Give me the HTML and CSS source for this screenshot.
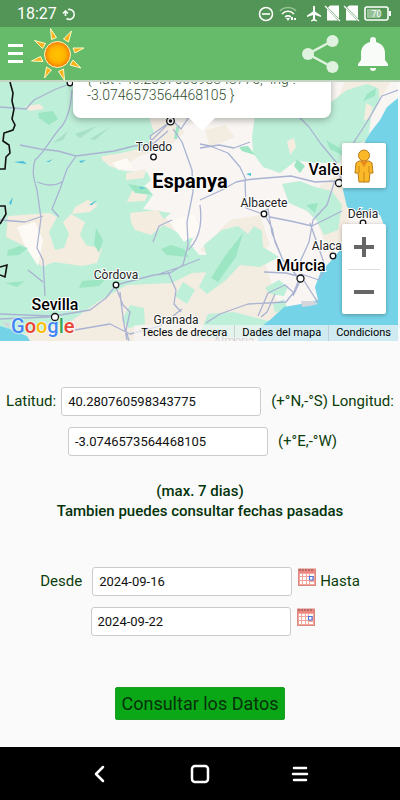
FILE: index.html
```html
<!DOCTYPE html>
<html lang="es">
<head>
    <meta charset="UTF-8">
    <meta name="viewport" content="width=device-width, initial-scale=1.0">
    <title>Consultar Datos</title>
    <link rel="stylesheet" href="styles.css">
</head>
<body>
    <div class="status-bar">
        <span class="clock">18:27</span>
        <svg width="14" height="14" viewBox="0 0 14 14" fill="none" stroke="#f1faf1" stroke-width="1.700"><path d="M6 2.500A5 5 0 1 1 4.500 11.500M3.500 9V5M1 6.500l2.500-2.500L6 6.500"/></svg>
        <svg class="status-icons" width="134" height="18" viewBox="258 5 134 18">
            <g fill="none" stroke="#fff" stroke-width="1.6">
                <circle cx="266" cy="14" r="6.500"/><path d="M262 14h8"/>
                <path d="M280 13a11 11 0 0 1 16 0" stroke="#94c296" transform="translate(0 -2)"/>
                <path d="M282 14a8 8 0 0 1 12 0M285 17a5 5 0 0 1 6 0"/>
                <rect x="365" y="7" width="23" height="13" rx="2"/>
            </g>
            <path fill="#fff" d="M286 18h4l-2 3zM291 17h2v3h-2zM294 18h2v2h-2zM313 6.500q1-1.500 2 0v5l6 4v1.500l-6-2v4l2 1.500v1l-3-.8-3 .8v-1l2-1.500v-4l-6 2v-1.500l6-4zM330 5.500h9v13L328 7.500zM327 9l11 11.500h-11zM349 5.500h9v13L347 7.500zM346 9l11 11.500h-11zM389 11h2v5h-2z"/>
            <path stroke="#fff" stroke-width="1.200" d="M325 6l15 15M344 6l15 15"/>
            <rect x="367" y="9" width="13" height="9" fill="#94c296"/>
            <text x="376.500" y="17" class="battery">70</text>
        </svg>
    </div>

    <header class="header">
        <button class="menu" aria-label="Menu"><i></i><i></i><i></i></button>
        <svg class="sun" width="54" height="54" viewBox="31 26 54 54">
            <defs><radialGradient id="sol"><stop offset="0" stop-color="#ffc400"/><stop offset=".6" stop-color="#ffb300"/><stop offset="1" stop-color="#f57c00"/></radialGradient></defs>
            <g fill="#f9b31a" stroke="#fff8c4" stroke-width="1" stroke-linejoin="round">
                <path d="M50.500 27.500l6 9-5 2zM71.500 30l-3 11-5-3zM84 47l-9 5-2-5zM81 67l-11-3 3-5zM64.500 79.500l-6-9 5-2.500zM44.500 77l2-11 5 3zM31.500 60l9-4.500 2.500 5zM34.500 39.500l11 3-3 5z"/>
                <circle cx="57.500" cy="53.500" r="13" fill="url(#sol)"/>
            </g>
        </svg>
        <button class="share" aria-label="Compartir">
            <svg width="38" height="40" viewBox="301 33 38 40"><g fill="#def2df"><path d="M332 40L308 53l24 13" fill="none" stroke="#def2df" stroke-width="2.500"/><circle cx="332.500" cy="40" r="6"/><circle cx="308" cy="53" r="6"/><circle cx="332.500" cy="66" r="6"/></g></svg>
        </button>
        <button class="bell" aria-label="Avisos">
            <svg width="30" height="36" viewBox="358 35 30 36"><path fill="#f8fbf8" d="M370 41v-2a3 3 0 0 1 6 0v2c6 1.500 9 6 9 11v7l3 4v2h-30v-2l3-4v-7c0-5 3-9.500 9-11zM370 67h6a3 3 0 0 1-6 0z"/></svg>
        </button>
    </header>

    <main>
        <div class="map">
            <svg class="terrain" viewBox="0 82 398 259" preserveAspectRatio="xMidYMid slice">
                <rect y="82" width="398" height="259" fill="#f8f5f2"/>
                <!-- zonas secas -->
                <g fill="#f3ece1">
                    <path d="M140 118l30 2 15 12-15 14-30 10-25 15-20-20zM205 130l20-5 10 12-25 10zM345 82h45l-10 18-20 22-10 25-14 2-5-35zM125 212l35-2 15 20-20 12-22-10zM0 312l80-6 60-35 70-12 30-18 22 10 14 48 20 18-15 24H0zM200 250l30-30 30-5 10 30-30 25zM320 185l25-15 5 60-20 25-12-30z"/>
                </g>
                <!-- vegetacion -->
                <g fill="#beefd9">
                    <path d="M0 82h73l30 35h46l5 15-8 15-20 5-25 5 8 9 16 5 22 1 4 8-13 12 15 3-10 14 28 4-12 10 24 12 16 20 28 0v16l-35 2-20 10-45 2-28 16-28 20-40 12-48 4z"/>
                    <path d="M252 137l3-22h42l33-12 17-13 20-6 11 4 2 12-9 17-3 23-25 8-3 15h-27l-16-3-17 13-17-6-10-14zM282 184l18-3 15 6 17 4 10 14-4 25-14 5-7-14-10-10-18-8zM204 245l18-15 16-4 10 8 6-8 8 5 1 16 16 10-19 10-20-2-14 15-19 14-8-7 10-20zM265 288l14-8 9 7-4 9-14-2zM273 304l11-5 3 8-12 6zM208 314l26-2 34 9 10 8-15 9h-65zM130 305l14 3 1 16-16 4-7-8zM183 282l12 8-8 14-12-8zM165 241l28-3-8 18-24-2z"/>
                </g>
                <g fill="#f4ecdf">
                    <path d="M8 216l42-3 7 4-8 15 6 18 9-2 5-14-6-12 8-8 14 8-5 13 6 10 16 4-5 14-15 3-28-4-12 5-19-22-17-8zM25 106l15-2 4 5-15 2zM101 157l11-3 14 13-3 4-20-10zM130 213l28-3 8 13-15 12-16-5-4-8zM75 207l13-7 10 5-8 7-18 2zM126 173l20-4-2 9-18 2zM132 191l18-3-5 13-18 1zM287 141l7-3 2 9-6 8zM366 103l7 4-3 11-6 3z"/>
                </g>
                <path fill="#fdfaf6" d="M17 227l18-5 8 18-5 26-14-22zM170 222l23-8 9 16-18 12zM112 163l15-5 6 10-15 2z"/>
                <path fill="#9ce6c4" d="M38 113l15-2 5 8-9 6-10-7zM8 250l12-4 8 2-9 7-12 1zM128 184l18 3 7 8-18-2zM161 249l10-4 13 4 5 8-22-2zM82 281l24-2-7 7-20 2zM5 283l20-2-8 6zM211 278l14-22 18-23-7 24-18 25zM239 147l9-1 7 9-13-4zM326 140l14 8 2 7-12-6zM297 159l8 7-5 7-6-7zM367 94l9-6-1 8-12 5zM176 127l4-2-3 14h-3zM96 228l7 12-4 13-5-9zM306 205l12-2-3 10z"/>
                <path fill="#a8dfc8" d="M53 143l15-12-5 9zM75 134l22-8-17 12zM90 139l20-12-15 13z"/>
                <path fill="#49bedb" d="M14 162l9-1 4 3-8-1zM46 162l7-3-4 3zM79 161l7-1-5 3zM9 203l4-6-2 8zM89 205l8-5-5 5zM139 187l7 1-5 1zM246 174l5-1v3z"/>
                <!-- mar -->
                <path fill="#75d3e8" d="M398 98l-11 9-7 13-10 13-7 12-18 30-2 15 4 17 16 10 17-2 4 10-14 7-20 10-10 8-10 12-9 9-6 16 3 13-17 4-17 3-13 12-13 10v18h140zM0 326l10 3 17 7 3 5H0z"/>
                <path fill="#d3d5dd" d="M301 301h13l4 3-8 2-8 1zM2 321l8 3-2 5z"/>
                <!-- carreteras -->
                <g fill="none" stroke="#aab3d2" stroke-width="1.300" stroke-linejoin="round">
                    <path d="M0 107l26 2 8-9 22-11 20-7M72 90c-1 15-4 28-10 36-10 10-17 26-27 34-4 14 0 22 2 30l4 28-4 30 6 12 2 36M20 145l20 4 18 2 18 5 38-5 20-5 20-3 14-12M76 156l-9 13-7 20-8 20 7 8M0 220l25 2 18-6M28 270l15 12M37 182q15 6 25 0"/>
                    <path d="M0 319l48-2 42-7 16-12 10-13 38-10 16-2 13-8 5-20-1-23 6-30-1-22-10-28-9-13M170 122l-20 14 3 12-14-4M171 121l-19 19-10 11M173 121l8 8 8-12M115 285l8 20 7 7-4 18 3 11M120 292q3 30 7 48M75 330l35-6 20 10 30-8 22-17M153 242l6-16 13-6M168 272l8 18-2 14 7 8M200 259l-20 8-24 8M0 314l52 2"/>
                    <path d="M200 144l10 2 18 7 12 14 6 13 8-1 37-3 24 6 20-1M200 148l19-3 15 3 16-6M200 200l22-10 14-8 10-2M245 180l1 28 14 5 8-4 4 24 10 25M264 213l8 15 3 14 8 18 15 17M294 112l15 15 12 17 15 18 7 25M270 217l25 5 17 4 30-15M398 90l-16 6-15 26-13 20-12 25M335 180l-8 25-14 15-4 22-9 20M301 274l-7 18-8 10-18 1-20 1-28 10-14 9M301 276l14 22 3 4M301 274l18 6 5-10M264 272l22 1 15 4M293 296l9-19M275 294l-8 18-6 5M258 316l10-23 17-8 9 8M310 223l14 40M200 205q4 30-12 45"/>
                </g>
                <path fill="none" stroke="#111" stroke-width="1.600" d="M10 82l3 11-1 8 2 8-2 10 3 6-2 5-9 3-1 8 6 4 1 8-4 4-1 12H0M0 206l5 0 1 8-6 10M0 267l7-2-2 12-5-2"/>
                <g fill="#fff" stroke="#111" stroke-width="1.300">
                    <circle cx="153.500" cy="157" r="2.800"/><circle cx="264" cy="214" r="2.800"/><circle cx="116" cy="285" r="2.800"/>
                    <circle cx="55" cy="317" r="3.500"/><circle cx="300.500" cy="278.500" r="3.500"/><circle cx="333" cy="256" r="2.800"/>
                    <circle cx="339" cy="183" r="3.500"/><circle cx="363" cy="223" r="2.800"/><circle cx="70" cy="83" r="2.800"/>
                    <circle cx="170.500" cy="121" r="3.800"/><circle cx="170.500" cy="121" r="1" fill="#111"/>
                </g>
                <g class="places">
                    <text x="154" y="151">Toledo</text>
                    <text x="264" y="207">Albacete</text>
                    <text x="363" y="218">Dénia</text>
                    <text x="332" y="250">Alacant</text>
                    <text x="116" y="279">Còrdova</text>
                    <text x="176" y="324">Granada</text>
                    <text x="234" y="345" opacity=".5">Almeria</text>
                    <text x="339" y="175" class="city">València</text>
                    <text x="301" y="271" class="city">Múrcia</text>
                    <text x="55" y="310" class="city">Sevilla</text>
                    <text x="190" y="188" class="country">Espanya</text>
                </g>
            </svg>
            <div class="popup">{ "lat": 40.280760598343775, "lng": -3.0746573564468105 }</div>
            <div class="map-controls">
                <button class="pegman" aria-label="Street View">
                    <svg width="20" height="34" viewBox="0 0 20 34"><g fill="#fbb829" stroke="#b97c13" stroke-width="1"><path d="M5 12h10l3 2 1 10h-3l-1 9H5l-1-9H1l1-10z"/><circle cx="10" cy="6.500" r="5.500"/></g><path d="M6 12h8l-4 6z" fill="#ea8a1c"/><path d="M10 23v10M5 17v7M15 17v7" stroke="#c78918" fill="none"/></svg>
                </button>
                <div class="zoom">
                    <button aria-label="Ampliar"><svg width="20" height="20"><path d="M10 0v20M0 10h20" stroke="#666" stroke-width="4"/></svg></button>
                    <button aria-label="Reducir"><svg width="20" height="20"><path d="M0 10h20" stroke="#666" stroke-width="4"/></svg></button>
                </div>
            </div>
            <a class="google" href="#"><span class="b">G</span><span class="r">o</span><span class="y">o</span><span class="b">g</span><span class="g">l</span><span class="r">e</span></a>
            <div class="credits">
                <a href="#">Tecles de drecera</a>
                <a href="#">Dades del mapa</a>
                <a href="#">Condicions</a>
            </div>
        </div>

        <form class="query">
            <div class="row">
                <label for="lat">Latitud:</label>
                <input type="text" id="lat" value="40.280760598343775">
                <span class="unit">(+°N,-°S) <label for="lon">Longitud:</label></span>
            </div>
            <div class="row">
                <input type="text" id="lon" value="-3.0746573564468105">
                <span class="unit">(+°E,-°W)</span>
            </div>
            <p class="note">(max. 7 dias)<br>Tambien puedes consultar fechas pasadas</p>
            <div class="row">
                <label class="from" for="desde">Desde</label>
                <input type="text" id="desde" value="2024-09-16">
                <button type="button" class="calendar" aria-label="Elegir fecha desde"><svg width="18" height="18"><use href="#cal"/></svg></button>
                <label class="until" for="hasta">Hasta</label>
            </div>
            <div class="row">
                <input type="text" id="hasta" value="2024-09-22">
                <button type="button" class="calendar" aria-label="Elegir fecha hasta"><svg width="18" height="18"><use href="#cal"/></svg></button>
            </div>
            <button type="button" class="submit">Consultar los Datos</button>
        </form>
    </main>

    <nav class="nav-bar">
        <button aria-label="Atras"><svg width="24" height="24"><path d="M15 5l-7 7 7 7"/></svg></button>
        <button aria-label="Inicio"><svg width="24" height="24"><rect x="4" y="4" width="16" height="16" rx="3"/></svg></button>
        <button aria-label="Recientes"><svg width="24" height="24"><path d="M6 6h12M5 12h14M6 18h12"/></svg></button>
    </nav>

    <svg width="0" height="0" class="defs">
        <symbol id="cal" viewBox="0 0 18 18">
            <rect x=".5" y="1" width="17" height="16.500" fill="#f6a59b" stroke="#d98880"/>
            <path d="M1 1h16v4H1z" fill="#e98880"/>
            <path d="M2 1v2M5 1v2M8 1v2M11 1v2M14 1v2" stroke="#8d4a48"/>
            <path fill="#fff" d="M2 6h2v2H2zM5 6h3v2H5zM9 6h2v2H9zM12 6h4v2h-4zM2 9h2v3H2zM5 9h3v3H5zM9 9h2v3H9zM2 13h2v3H2zM5 13h3v3H5zM9 13h2v3H9zM12 14h4v2h-4z"/>
            <path d="M11.500 8.500h3.500v3.500h-3.500z" fill="#fff" stroke="#4877d9" stroke-width="1.200"/>
        </symbol>
    </svg>
</body>
</html>
```
FILE: styles.css
```css
* {
    box-sizing: border-box;
}
body {
    margin: 0;
    min-height: 100vh;
    display: flex;
    flex-direction: column;
    background: #fafafa;
    color: #0b3d0b;
    font-family: Roboto, Arial, sans-serif;
    font-size: 15px;
}
button {
    padding: 0;
    border: 0;
    background: none;
    font-family: inherit;
}
svg {
    display: block;
}
.defs {
    position: absolute;
}

/* barra de estado y cabecera */
.status-bar {
    height: 27px;
    padding: 0 8px 0 17px;
    display: flex;
    align-items: center;
    gap: 5px;
    background: #529556;
    color: #fff;
}
.clock {
    font-size: 16px;
}
.status-icons {
    margin-left: auto;
}
.battery {
    fill: #fff;
    font-size: 9px;
    text-anchor: middle;
}
.header {
    height: 55px;
    padding: 0 12px 0 8px;
    display: flex;
    align-items: center;
    background: #66bb6a;
    border-bottom: 2px solid #c5d6c5;
}
.menu {
    display: flex;
    flex-direction: column;
    gap: 5px;
}
.menu i {
    width: 15px;
    height: 3px;
    background: #fff;
}
.sun {
    margin-left: 8px;
}
.share {
    margin-left: auto;
    margin-right: 19px;
}

/* mapa */
.map {
    position: relative;
    height: 259px;
    margin-right: 2px;
    overflow: hidden;
}
.terrain {
    width: 100%;
    height: 100%;
}
.places {
    font-size: 12px;
    fill: #222;
    stroke: #fff;
    stroke-width: 2px;
    paint-order: stroke;
    text-anchor: middle;
}
.city {
    font-size: 16px;
    font-weight: 500;
    fill: #000;
}
.country {
    font-size: 20px;
    font-weight: 700;
    fill: #000;
}
.popup {
    position: absolute;
    top: -20px;
    left: 73px;
    width: 258px;
    padding: 9px 14px 15px;
    border-radius: 8px;
    background: #fff;
    color: #2f4f2f;
    font-size: 14px;
    font-weight: 300;
    line-height: 16px;
    box-shadow: 0 2px 7px rgba(0, 0, 0, .3);
}
.popup::after {
    content: "";
    position: absolute;
    top: 100%;
    left: 50%;
    margin-left: -13px;
    border: 13px solid transparent;
    border-top-color: #fff;
    border-bottom: 0;
}
.map-controls {
    position: absolute;
    right: 12px;
    bottom: 27px;
    display: flex;
    flex-direction: column;
    gap: 36px;
}
.pegman,
.zoom {
    width: 44px;
    border-radius: 2px;
    background: #fff;
    box-shadow: 0 1px 4px rgba(0, 0, 0, .3);
}
.pegman,
.zoom button {
    height: 45px;
    display: flex;
    align-items: center;
    justify-content: center;
}
.zoom {
    padding: 0 6px;
}
.zoom button {
    width: 100%;
}
.zoom button + button {
    border-top: 1px solid #ddd;
}
.google {
    position: absolute;
    left: 11px;
    bottom: 3px;
    font-size: 20px;
    font-weight: 500;
    line-height: 24px;
    text-decoration: none;
    text-shadow: 0 0 2px #fff, 0 0 2px #fff;
}
.b { color: #4285f4; }
.r { color: #ea4335; }
.y { color: #fbbc05; }
.g { color: #34a853; }
.credits {
    position: absolute;
    right: 0;
    bottom: 0;
    display: flex;
    font-size: 11px;
    line-height: 16px;
}
.credits a {
    padding: 0 7px;
    background: rgba(245, 245, 245, .7);
    color: #000;
    text-decoration: none;
}
.credits a + a {
    border-left: 1px solid rgba(180, 190, 195, .6);
}

/* formulario */
.query {
    padding: 40px 0 26px;
    display: flex;
    flex-direction: column;
    align-items: center;
}
.row {
    height: 40px;
    display: flex;
    align-items: center;
    white-space: nowrap;
}
.row input {
    width: 200px;
    height: 29px;
    margin-left: 5px;
    padding: 0 6px;
    border: 1px solid #ccc;
    border-radius: 3px;
    background: #fff;
    color: #111;
    font-family: inherit;
    font-size: 13px;
}
.unit {
    margin-left: 10px;
}
.note {
    margin: 20px 0 40px;
    font-weight: 500;
    line-height: 20px;
    text-align: center;
    color: #04330b;
}
.from {
    margin-right: 5px;
}
.calendar {
    margin: 0 0 8px 6px;
}
.until {
    margin-left: 4px;
}
.submit {
    height: 33px;
    margin-top: 46px;
    padding: 0 5px;
    border: 1px solid #1d9c28;
    border-radius: 2px;
    background: #0aa817;
    color: #06310a;
    font-size: 18px;
}

/* botones del movil */
.nav-bar {
    height: 53px;
    margin-top: auto;
    padding: 0 88px;
    display: flex;
    align-items: center;
    justify-content: space-between;
    background: #000;
}
.nav-bar svg {
    fill: none;
    stroke: #fff;
    stroke-width: 2.5px;
    stroke-linecap: round;
    stroke-linejoin: round;
}
```
